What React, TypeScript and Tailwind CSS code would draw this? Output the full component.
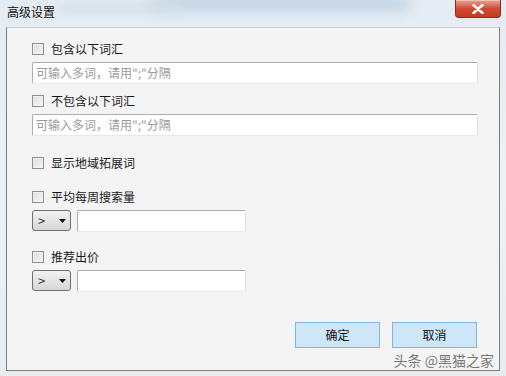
const font = { fontFamily: '"Noto Sans CJK SC", "Noto Sans", sans-serif' };

const Check = ({ label }: { label: string }) => (
  <label className="flex h-[14px] items-center gap-[7px] text-[12px] leading-none text-[#1a1a1a]">
    <span className="h-[12px] w-[12px] border border-[#8f8f8f] bg-gradient-to-br from-[#dcdcdc] to-[#f7f7f7] shadow-[inset_0_0_0_1px_#f2f2f2]" />
    <span>{label}</span>
  </label>
);

const TextBox = ({ placeholder, w }: { placeholder?: string; w: string }) => (
  <div
    className={`${w} flex h-[22px] items-center rounded-[2px] border border-[#abadb3] border-b-[#e3e9ef] border-r-[#dbdfe6] bg-white px-[3px] text-[12px] text-[#9a9a9a]`}
  >
    {placeholder}
  </div>
);

const Combo = () => (
  <div className="flex h-[21px] w-[39px] items-center justify-between rounded-[3px] border border-[#707070] bg-gradient-to-b from-[#f2f2f2] to-[#d6d6d6] pl-[5px] pr-[4px] text-[13px] text-[#333]">
    <span className="leading-none">&gt;</span>
    <svg width="7" height="4" viewBox="0 0 7 4">
      <path d="M0 0h7L3.5 4z" fill="#111" />
    </svg>
  </div>
);

const Btn = ({ label }: { label: string }) => (
  <button className="flex h-[26px] w-[85px] items-center justify-center border border-[#7eb4ea] bg-[#cde6f8] text-[12px] text-[#111]">
    {label}
  </button>
);

export default function App() {
  return (
    <div
      style={font}
      className="relative h-[376px] w-[506px] overflow-hidden bg-gradient-to-b from-[#e4ebf2] via-[#eef1f4] to-[#e8ecf0]"
    >
      {/* blurred aero streak */}
      <div className="pointer-events-none absolute left-[150px] top-[-2px] h-[12px] w-[260px] rounded-full bg-[#bfd2e3] blur-[6px]" />
      <div className="pointer-events-none absolute left-[60px] top-[4px] h-[8px] w-[120px] rounded-full bg-[#d3dfe9] blur-[5px]" />

      {/* title bar */}
      <div className="relative flex h-[27px] items-start justify-between">
        <span className="pl-[7px] pt-[6px] text-[12px] leading-none text-[#111]">高级设置</span>
        <div className="mr-[5px] flex h-[18px] w-[46px] items-center justify-center rounded-b-[4px] border border-t-0 border-[#8c2a1d] bg-gradient-to-b from-[#e6a595] via-[#cf4a32] to-[#c23a22] shadow-[inset_0_1px_0_#f0c0b0]">
          <svg width="12" height="10" viewBox="0 0 12 10">
            <path d="M1.5 1l9 8M10.5 1l-9 8" stroke="#fff" strokeWidth="2.6" strokeLinecap="round" />
          </svg>
        </div>
      </div>

      {/* client area */}
      <div className="relative mx-[6px] h-[344px] border border-[#7d7d7d] border-t-[#c9ced4] bg-[#f4f4f4] pl-[25px] pr-[22px] pt-[14px]">
        <div className="flex flex-col">
          <Check label="包含以下词汇" />
          <div className="mt-[6px] pr-[2px]">
            <TextBox w="w-[446px]" placeholder="可输入多词，请用&quot;;&quot;分隔" />
          </div>
          <div className="mt-[10px]">
            <Check label="不包含以下词汇" />
          </div>
          <div className="mt-[6px]">
            <TextBox w="w-[446px]" placeholder="可输入多词，请用&quot;;&quot;分隔" />
          </div>
          <div className="mt-[20px]">
            <Check label="显示地域拓展词" />
          </div>
          <div className="mt-[20px]">
            <Check label="平均每周搜索量" />
          </div>
          <div className="mt-[6px] flex gap-[6px]">
            <Combo />
            <TextBox w="w-[169px] h-[21px]" />
          </div>
          <div className="mt-[18px]">
            <Check label="推荐出价" />
          </div>
          <div className="mt-[6px] flex gap-[6px]">
            <Combo />
            <TextBox w="w-[169px] h-[21px]" />
          </div>
        </div>

        <div className="mt-[30px] flex justify-end gap-[12px]">
          <Btn label="确定" />
          <Btn label="取消" />
        </div>

        {/* watermark */}
        <span className="absolute bottom-[3px] right-[5px] text-[14px] leading-none text-[#555]/80">
          头条 @黑猫之家
        </span>
      </div>
    </div>
  );
}
